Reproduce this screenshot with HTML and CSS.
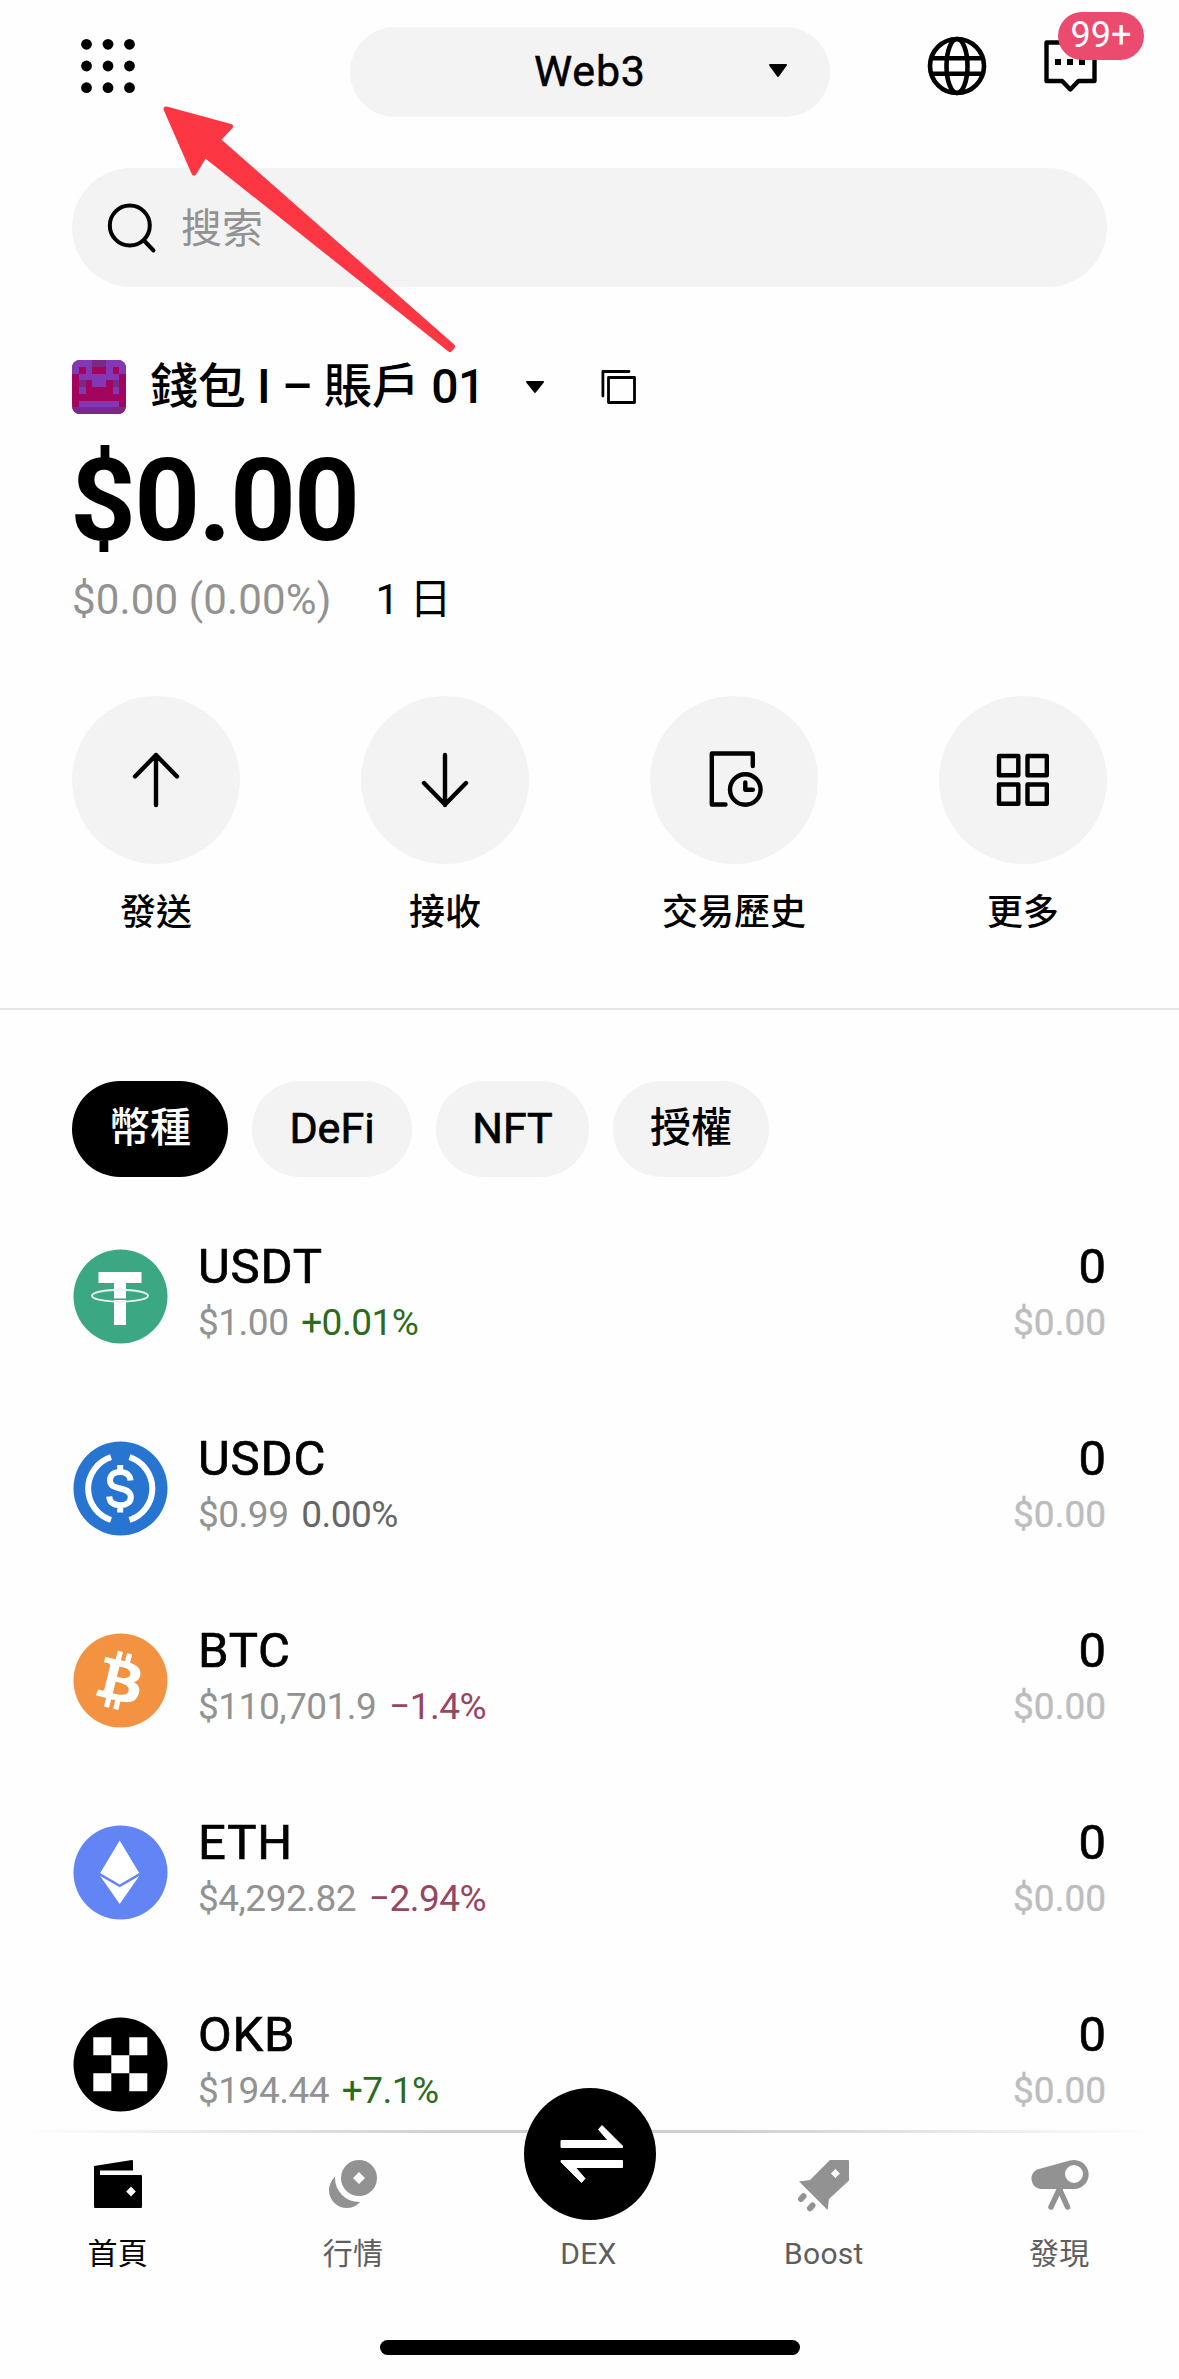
FILE: index.html
```html
<!DOCTYPE html>
<html lang="zh-Hant">
<head>
<meta charset="utf-8">
<title>Web3</title>
<link rel="stylesheet" href="styles.css">
</head>
<body>
<div class="screen">
  <header class="header">
    <svg class="apps" width="54" height="56" viewBox="0 0 54 56"><g><circle cx="5.5" cy="6.3" r="5.4"/><circle cx="27" cy="6.3" r="5.4"/><circle cx="48.5" cy="6.3" r="5.4"/><circle cx="5.5" cy="28" r="5.4"/><circle cx="27" cy="28" r="5.4"/><circle cx="48.5" cy="28" r="5.4"/><circle cx="5.5" cy="49.7" r="5.4"/><circle cx="27" cy="49.7" r="5.4"/><circle cx="48.5" cy="49.7" r="5.4"/></g></svg>
    <div class="network"><span class="network-name">Web3</span><svg class="network-caret" width="20" height="14" viewBox="0 0 20 14"><path d="M2 1h16L10 12z" stroke="#000" stroke-width="2" stroke-linejoin="round"/></svg></div>
    <svg class="globe" width="60" height="60" viewBox="0 0 60 60" fill="none" stroke="#000" stroke-width="4.6"><circle cx="30" cy="30" r="27"/><ellipse cx="30" cy="30" rx="10.5" ry="27"/><path d="M5 22.3h50M5 37.7h50"/></svg>
    <div class="chat">
      <svg width="54" height="54" viewBox="0 0 54 54"><path d="M2.500 3.500h48v38.500H34.500L26.300 50.500l-8.200-8.500H2.500z" fill="none" stroke="#000" stroke-width="4.400" stroke-linejoin="round"/><path d="M11 20h6v6h-6zM23 20h6v6h-6zM35 20h6v6h-6z"/></svg>
      <span class="badge">99+</span>
    </div>
  </header>

  <div class="search">
    <svg width="52" height="52" viewBox="0 0 52 52" fill="none" stroke="#000" stroke-width="4" stroke-linecap="round"><circle cx="22.800" cy="23.500" r="20"/><path d="M37 38.500l9.500 10"/></svg>
    <span class="search-hint">搜索</span>
  </div>

  <div class="account">
    <svg class="avatar" width="54" height="54" viewBox="0 0 8 8" shape-rendering="crispEdges">
      <path fill="#a3045e" d="M0 0h8v8H0z"/>
      <path fill="#8237b5" d="M0 0h3v1H0zM5 0h3v1H5zM0 1h1v1H0zM2 1h1v1H2zM5 1h1v1H5zM7 1h1v1H7zM1 2h6v1H1zM3 3h2v1H3zM1 4h1v1H1zM6 4h1v1H6zM1 6h6v1H1z"/>
      <path fill="#762987" d="M3 0h2v1H3zM1 3h1v1H1zM6 3h1v1H6zM0 7h8v1H0z"/>
    </svg>
    <span class="account-name">錢包 I – 賬戶 01</span>
    <svg class="account-caret" width="20" height="14" viewBox="0 0 20 14"><path d="M2 2h16L10 12z" stroke="#000" stroke-width="2" stroke-linejoin="round"/></svg>
    <svg width="36" height="36" viewBox="0 0 36 36" fill="none" stroke="#000" stroke-width="2.800"><path d="M7.500 8.500h26v25h-26z" stroke-linejoin="round"/><path d="M1.900 27V2.500H28" stroke-linecap="round" stroke-linejoin="round"/></svg>
  </div>

  <div class="balance">$0.00</div>
  <div class="change"><span class="change-value">$0.00 (0.00%)</span><span>1 日</span></div>

  <div class="actions">
    <div class="action"><div class="action-icon"><svg width="60" height="60" viewBox="0 0 60 60"><path d="M30 55V5M9 26.500L30 5l21 21.500"/></svg></div><span>發送</span></div>
    <div class="action"><div class="action-icon"><svg width="60" height="60" viewBox="0 0 60 60"><path d="M30 5v50M9 33l21 21.500L51 33"/></svg></div><span>接收</span></div>
    <div class="action"><div class="action-icon"><svg width="60" height="60" viewBox="0 0 60 60"><path d="M48.800 16V3.500h-41V54.500H21.500"/><circle cx="41.300" cy="39.500" r="15.300"/><path d="M41.300 32.500v7.200h7.500"/></svg></div><span>交易歷史</span></div>
    <div class="action"><div class="action-icon"><svg width="60" height="60" viewBox="0 0 60 60"><path d="M6 6h19.300v19.300H6zM34.500 6h19.300v19.300H34.500zM6 34.500h19.300v19.300H6zM34.500 34.500h19.300v19.300H34.500z"/></svg></div><span>更多</span></div>
  </div>

  <div class="divider"></div>

  <nav class="tabs">
    <span class="tab tab-active">幣種</span><span class="tab tab-defi">DeFi</span><span class="tab tab-nft">NFT</span><span class="tab">授權</span>
  </nav>

  <div class="tokens">
    <div class="token">
      <svg class="token-logo" viewBox="0 0 95 95"><circle cx="47.500" cy="47.500" r="47" fill="#3ba783"/><path fill="#fff" d="M25.500 23h43v11H53v42H41V34H25.500z"/><path stroke="#3ba783" stroke-width="1.500" d="M40 50.200h14"/><ellipse cx="47" cy="46.700" rx="28" ry="6" fill="none" stroke="#e4f5ef" stroke-width="1.900"/></svg>
      <div class="token-info"><span class="token-name">USDT</span><span class="token-price">$1.00 <b class="up">+0.01%</b></span></div>
      <div class="token-holding"><span class="token-amount">0</span><span class="token-value">$0.00</span></div>
    </div>
    <div class="token">
      <svg class="token-logo" viewBox="0 0 95 95"><circle cx="47.500" cy="47.500" r="47" fill="#2775d0"/><g fill="none" stroke="#fff" stroke-width="6"><path d="M38 16.200A33 33 0 0 0 38 79M56.500 16.200A33 33 0 0 1 56.500 79"/><path d="M57.500 39.500C57 34 53 31 47.200 31 41 31 37 34 37 39.300c0 5.500 4.500 7 10.200 8.200 6 1.200 10.600 3 10.600 8.700 0 5.300-4.300 8-10.600 8-6.200 0-10.500-2.700-11-8.700M47.200 24v7M47.200 64v7.500"/></g></svg>
      <div class="token-info"><span class="token-name">USDC</span><span class="token-price">$0.99 <b class="flat">0.00%</b></span></div>
      <div class="token-holding"><span class="token-amount">0</span><span class="token-value">$0.00</span></div>
    </div>
    <div class="token">
      <svg class="token-logo" viewBox="0 0 32 32"><circle cx="16" cy="16" r="15.830" fill="#f39240"/><path fill="#fff" transform="translate(-.5 0)" d="M23.189 14.020c.314-2.096-1.283-3.223-3.465-3.975l.708-2.840-1.728-.430-.690 2.765c-.454-.114-.920-.220-1.385-.326l.695-2.783L15.596 6l-.708 2.839c-.376-.086-.746-.170-1.104-.260l.002-.009-2.384-.595-.460 1.846s1.283.294 1.256.312c.700.175.826.638.805 1.006l-.806 3.235c.048.012.110.030.180.057l-.183-.045-1.130 4.532c-.086.212-.303.531-.793.410.018.025-1.256-.313-1.256-.313l-.858 1.978 2.250.561c.418.105.828.215 1.231.318l-.715 2.872 1.727.430.708-2.840c.472.127.930.245 1.378.357l-.706 2.828 1.728.430.715-2.866c2.948.558 5.164.333 6.097-2.333.752-2.146-.037-3.385-1.588-4.192 1.130-.260 1.980-1.003 2.207-2.538zm-3.950 5.538c-.533 2.147-4.148.986-5.320.695l.950-3.805c1.172.293 4.929.872 4.370 3.110zm.535-5.569c-.487 1.953-3.495.960-4.470.717l.860-3.450c.975.243 4.118.696 3.610 2.733z"/></svg>
      <div class="token-info"><span class="token-name">BTC</span><span class="token-price">$110,701.9 <b class="down">−1.4%</b></span></div>
      <div class="token-holding"><span class="token-amount">0</span><span class="token-value">$0.00</span></div>
    </div>
    <div class="token">
      <svg class="token-logo" viewBox="0 0 95 95"><circle cx="47.500" cy="47.500" r="47" fill="#6284f5"/><path fill="#fff" d="M46.700 15.500L66.200 48 46.700 59.500 27.200 48zM27.200 51l19.500 11.300L66.200 51 46.700 79z"/></svg>
      <div class="token-info"><span class="token-name">ETH</span><span class="token-price">$4,292.82 <b class="down">−2.94%</b></span></div>
      <div class="token-holding"><span class="token-amount">0</span><span class="token-value">$0.00</span></div>
    </div>
    <div class="token">
      <svg class="token-logo" viewBox="0 0 95 95"><circle cx="47.500" cy="47.500" r="47"/><path fill="#fff" d="M20.300 20.300h18v18h-18zM56.300 20.300h18v18h-18zM38.300 38.300h18v18h-18zM20.300 56.300h18v18h-18zM56.300 56.300h18v18h-18z"/></svg>
      <div class="token-info"><span class="token-name">OKB</span><span class="token-price">$194.44 <b class="up">+7.1%</b></span></div>
      <div class="token-holding"><span class="token-amount">0</span><span class="token-value">$0.00</span></div>
    </div>
  </div>

  <footer class="bottom">
    <div class="bottom-line"></div>
    <nav class="menu">
      <div class="menu-item menu-current"><svg width="48" height="54" viewBox="0 0 48 54"><path fill-rule="evenodd" d="M0 6L38 0q1 0 1 1v9.500H6V15h41q1 0 1 1v31q0 1-1 1H1q-1 0-1-1zM37 26.500l-4.800 5 4.800 5 4.800-5z"/></svg><span>首頁</span></div>
      <div class="menu-item"><svg width="48" height="54" viewBox="0 0 48 54"><mask id="gap"><path fill="#fff" d="M0 0h48v54H0z"/><circle cx="30" cy="18" r="24" fill="#000"/></mask><g mask="url(#gap)"><circle cx="17.800" cy="30.200" r="17.800"/></g><path fill-rule="evenodd" d="M30 0a18 18 0 1 0 0 36 18 18 0 1 0 0-36zM30 12l6 6-6 6-6-6z"/></svg><span>行情</span></div>
      <div class="menu-item"><span>DEX</span></div>
      <div class="menu-item"><svg width="54" height="54" viewBox="0 0 54 54"><path fill-rule="evenodd" d="M33 0h18q1 0 1 1v19.500L32 39l-1.400 11L2 21.500 13 20zM38.400 9l-4.500 4.500 4.500 4.500 4.500-4.500z"/><path d="M6.500 36.300l-2.500 2.700M15.500 45.500l-2.500 2.700" fill="none" stroke="#929292" stroke-width="6" stroke-linecap="round"/></svg><span>Boost</span></div>
      <div class="menu-item"><svg width="60" height="54" viewBox="0 0 60 54"><path fill-rule="evenodd" d="M8 9.500L41 0.600A14.500 14.500 0 1 1 45 29H11A10.500 10.500 0 0 1 8 9.500zM45 5a9 9 0 1 0 0 18 9 9 0 1 0 0-18z"/><path d="M30.500 29L22 47M30.500 29L38.500 47" fill="none" stroke="#929292" stroke-width="5.500" stroke-linecap="round"/></svg><span>發現</span></div>
    </nav>
    <svg class="swap" width="132" height="132" viewBox="0 0 132 132"><circle cx="66" cy="66" r="66"/><path id="half" fill="#fff" stroke="#fff" stroke-linejoin="round" d="M37 52.500H84L74.500 41.500 78 37.500 98.500 58v1.500H37z"/><use href="#half" transform="rotate(180 67.750 66)"/></svg>
    <div class="home-bar"></div>
  </footer>

  <svg class="pointer" width="300" height="252" viewBox="0 0 300 252"><path fill="#fd3643" stroke="#fd3643" stroke-width="5" stroke-linejoin="round" d="M7 9L71.500 26.500 59 39.800 293.500 246.500 291 249.500 46 55 35 73z"/></svg>
</div>
</body>
</html>
```
FILE: styles.css
```css
* { box-sizing: border-box; }

body {
  margin: 0;
  background: #fefefe;
  color: #000;
  font-family: Roboto, "Noto Sans CJK TC", sans-serif;
}

svg { display: block; flex: none; }

.screen {
  position: relative;
  width: 1179px;
  height: 2379px;
  overflow: hidden;
}

/* Top bar */
.header {
  display: flex;
  align-items: flex-start;
  height: 168px;
  padding: 27px 72px 0 81px;
}
.apps { margin-top: 11px; }
.network {
  display: flex;
  align-items: center;
  width: 480px;
  height: 90px;
  margin-left: 215px;
  padding: 0 42px 3px 184px;
  border-radius: 45px;
  background: #f3f3f3;
}
.network-name {
  font-size: 43px;
  line-height: 60px;
  letter-spacing: 0.8px;
  -webkit-text-stroke: 0.5px;
}
.network-caret { margin-left: auto; }
.globe { margin: 9px 0 0 97px; }
.chat { position: relative; margin: 12px 0 0 57px; }
.badge {
  position: absolute;
  left: 14px;
  top: -27px;
  width: 86px;
  height: 48px;
  border-radius: 24px;
  background: #eb4b6e;
  color: #fff;
  font-size: 36px;
  line-height: 47px;
  text-align: center;
}

/* Search field */
.search {
  display: flex;
  align-items: center;
  gap: 22px;
  height: 119px;
  margin: 0 72px;
  padding: 0 35px;
  border-radius: 60px;
  background: #f3f3f3;
  color: #929292;
  font-size: 41px;
}
.search-hint { padding-bottom: 6px; }

/* Account and balance */
.account {
  display: flex;
  align-items: center;
  height: 60px;
  margin: 70px 72px 0;
}
.avatar { border-radius: 8px; }
.account-name {
  width: 375px;
  margin-left: 24px;
  font-size: 48px;
  font-weight: 500;
  line-height: 62px;
  letter-spacing: -0.3px;
  white-space: nowrap;
}
.account-caret { margin-right: 56px; }
.balance {
  margin: 19px 70px 0;
  font-size: 115px;
  font-weight: 700;
  line-height: 130px;
  letter-spacing: -1.8px;
}
.change {
  display: flex;
  gap: 44px;
  margin: 4px 72px 0;
  font-size: 42px;
  line-height: 60px;
}
.change-value { color: #929292; letter-spacing: 0.15px; }

/* Quick actions */
.actions {
  display: flex;
  justify-content: space-between;
  margin: 66px 72px 0;
}
.action {
  display: flex;
  flex-direction: column;
  align-items: center;
  gap: 24px;
  width: 168px;
  font-size: 36px;
  font-weight: 500;
  line-height: 50px;
}
.action-icon {
  display: grid;
  place-items: center;
  width: 168px;
  height: 168px;
  border-radius: 50%;
  background: #f3f3f3;
}
.action-icon svg {
  fill: none;
  stroke: #000;
  stroke-width: 4.4;
  stroke-linecap: round;
  stroke-linejoin: round;
}

.divider { height: 2px; margin-top: 70px; background: #e6e6e6; }

/* Asset tabs */
.tabs { display: flex; gap: 24px; margin: 71px 72px 23px; }
.tab {
  width: 156px;
  height: 96px;
  border-radius: 48px;
  background: #f3f3f3;
  font-size: 41px;
  font-weight: 500;
  line-height: 95px;
  text-align: center;
}
.tab-defi, .tab-nft {
  font-size: 43px;
  font-weight: 400;
  -webkit-text-stroke: 0.7px;
}
.tab-defi { width: 160px; }
.tab-nft { width: 153px; }
.tab-active { background: #000; color: #fff; }

/* Token list */
.tokens { height: 930px; overflow: hidden; }
.token { display: flex; height: 192px; padding: 39px 73px 0; }
.token-logo { width: 95px; height: 95px; margin-top: 10px; }
.token-info, .token-holding { display: flex; flex-direction: column; line-height: 56px; }
.token-info { margin-left: 30px; }
.token-holding { margin-left: auto; align-items: flex-end; }
.token-name, .token-amount { font-size: 49px; -webkit-text-stroke: 0.7px; }
.token-name { letter-spacing: 0.8px; }
.token-price, .token-value { font-size: 37px; letter-spacing: -0.5px; }
.token-price { color: #929292; }
.token-price b { margin-left: 4px; font-weight: 400; }
.token-value { color: #bdbdbd; letter-spacing: 0; -webkit-text-stroke: 0.4px; }
.up { color: #2d6b1c; }
.flat { color: #666; }
.down { color: #994562; }

/* Bottom navigation */
.bottom { position: relative; }
.bottom-line {
  height: 3px;
  background: linear-gradient(90deg, transparent 2%, #d0d0d0 38%, #d0d0d0 62%, transparent 98%);
}
.menu { display: grid; grid-template-columns: repeat(5, 1fr); width: 1177px; }
.menu-item {
  display: flex;
  flex-direction: column;
  align-items: center;
  justify-content: flex-end;
  gap: 22px;
  height: 139px;
  color: #5e5e5e;
  fill: #929292;
  font-size: 30px;
  line-height: 36px;
  letter-spacing: 0.3px;
}
.menu-current { color: #000; fill: #000; }
.swap { position: absolute; left: 524px; top: -42px; }
.home-bar {
  width: 420px;
  height: 15px;
  margin: 68px auto 0;
  border-radius: 8px;
  background: #000;
}

.pointer { position: absolute; left: 159px; top: 100px; }
```
